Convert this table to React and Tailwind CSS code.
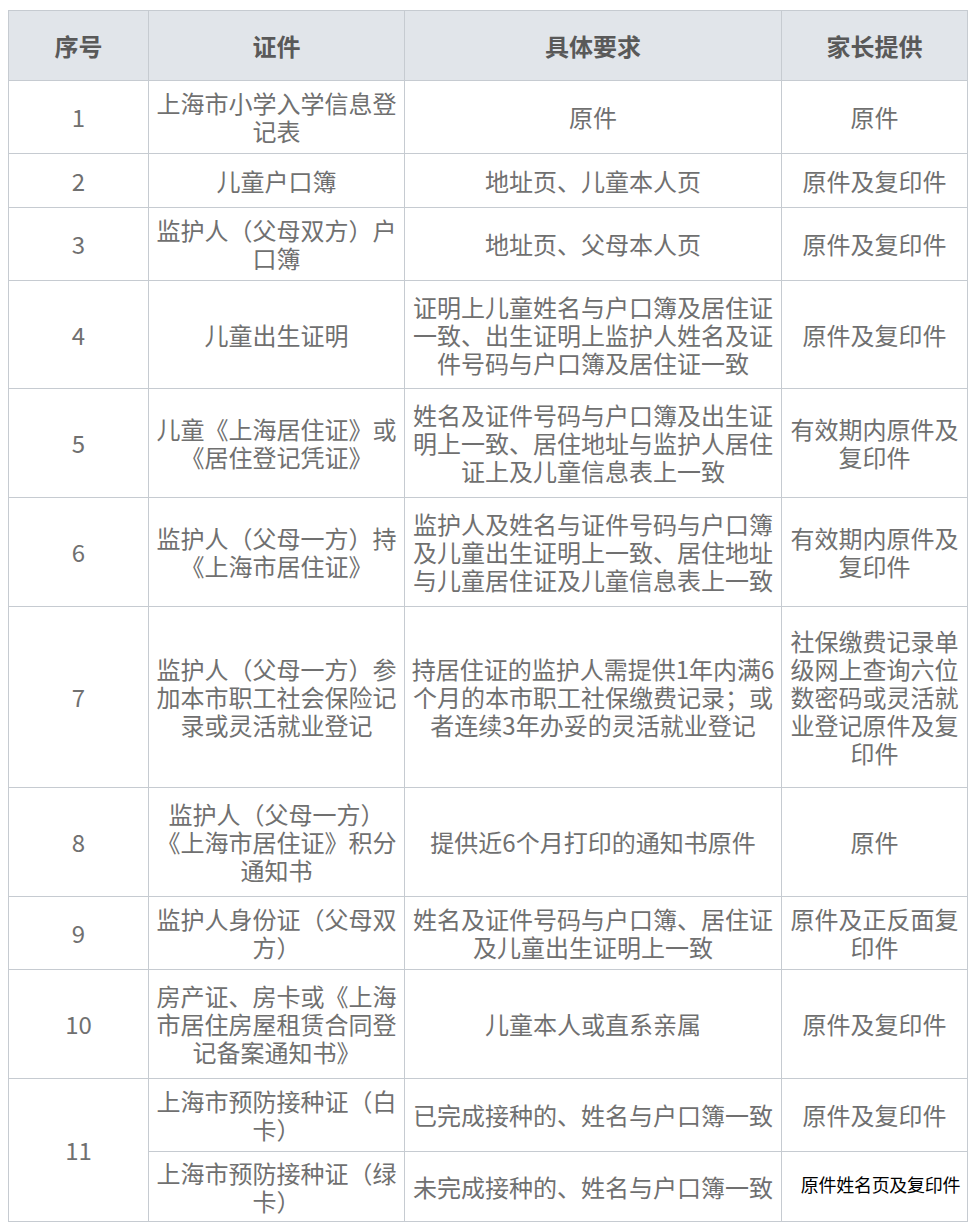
import React from "react";

// each cell is a list of lines, broken the way the picture breaks them
const rows = [
  { no: "1", h: 73, doc: ["上海市小学入学信息登", "记表"], req: ["原件"], give: ["原件"] },
  { no: "2", h: 54, doc: ["儿童户口簿"], req: ["地址页、儿童本人页"], give: ["原件及复印件"] },
  { no: "3", h: 73, doc: ["监护人（父母双方）户", "口簿"], req: ["地址页、父母本人页"], give: ["原件及复印件"] },
  {
    no: "4",
    h: 108,
    doc: ["儿童出生证明"],
    req: ["证明上儿童姓名与户口簿及居住证", "一致、出生证明上监护人姓名及证", "件号码与户口簿及居住证一致"],
    give: ["原件及复印件"],
  },
  {
    no: "5",
    h: 109,
    doc: ["儿童《上海居住证》或", "《居住登记凭证》"],
    req: ["姓名及证件号码与户口簿及出生证", "明上一致、居住地址与监护人居住", "证上及儿童信息表上一致"],
    give: ["有效期内原件及", "复印件"],
  },
  {
    no: "6",
    h: 109,
    doc: ["监护人（父母一方）持", "《上海市居住证》"],
    req: ["监护人及姓名与证件号码与户口簿", "及儿童出生证明上一致、居住地址", "与儿童居住证及儿童信息表上一致"],
    give: ["有效期内原件及", "复印件"],
  },
  {
    no: "7",
    h: 181,
    doc: ["监护人（父母一方）参", "加本市职工社会保险记", "录或灵活就业登记"],
    req: ["持居住证的监护人需提供1年内满6", "个月的本市职工社保缴费记录；或", "者连续3年办妥的灵活就业登记"],
    give: ["社保缴费记录单", "级网上查询六位", "数密码或灵活就", "业登记原件及复", "印件"],
  },
  {
    no: "8",
    h: 109,
    doc: ["监护人（父母一方）", "《上海市居住证》积分", "通知书"],
    req: ["提供近6个月打印的通知书原件"],
    give: ["原件"],
  },
  {
    no: "9",
    h: 73,
    doc: ["监护人身份证（父母双", "方）"],
    req: ["姓名及证件号码与户口簿、居住证", "及儿童出生证明上一致"],
    give: ["原件及正反面复", "印件"],
  },
  {
    no: "10",
    h: 109,
    doc: ["房产证、房卡或《上海", "市居住房屋租赁合同登", "记备案通知书》"],
    req: ["儿童本人或直系亲属"],
    give: ["原件及复印件"],
  },
];

const Lines = ({ lines }) =>
  lines.map((l, i) => (
    <React.Fragment key={i}>
      {i > 0 && <br />}
      {l}
    </React.Fragment>
  ));

const td = "border border-[#c6cbd1] text-center align-middle px-1 whitespace-nowrap";

export default function App() {
  return (
    <div
      className="bg-white w-[974px] h-[1228px] pt-[10px] pl-[8px]"
      style={{ fontFamily: '"Noto Sans CJK SC", "Noto Sans", sans-serif' }}
    >
      <table className="border-collapse table-fixed w-[959px] text-[24px] leading-[28px] text-[#707070]">
        <colgroup>
          <col className="w-[140px]" />
          <col className="w-[256px]" />
          <col className="w-[377px]" />
          <col className="w-[186px]" />
        </colgroup>
        <thead>
          <tr className="h-[70px] bg-[#e1e5ea] text-[#595959] font-bold">
            <th className={td}>序号</th>
            <th className={td}>证件</th>
            <th className={td}>具体要求</th>
            <th className={td}>家长提供</th>
          </tr>
        </thead>
        <tbody>
          {rows.map((r) => (
            <tr key={r.no} style={{ height: r.h }}>
              <td className={td}>{r.no}</td>
              <td className={td}>
                <Lines lines={r.doc} />
              </td>
              <td className={td}>
                <Lines lines={r.req} />
              </td>
              <td className={td}>
                <Lines lines={r.give} />
              </td>
            </tr>
          ))}
          <tr className="h-[73px]">
            <td className={td} rowSpan={2}>
              11
            </td>
            <td className={td}>
              上海市预防接种证（白
              <br />
              卡）
            </td>
            <td className={td}>已完成接种的、姓名与户口簿一致</td>
            <td className={td}>原件及复印件</td>
          </tr>
          <tr className="h-[70px]">
            <td className={td}>
              上海市预防接种证（绿
              <br />
              卡）
            </td>
            <td className={td}>未完成接种的、姓名与户口簿一致</td>
            <td className={`${td} text-[18px] leading-[22px] text-black pl-[12px] pr-0 pb-[6px] tracking-[-0.3px]`}>
              原件姓名页及复印件
            </td>
          </tr>
        </tbody>
      </table>
    </div>
  );
}
